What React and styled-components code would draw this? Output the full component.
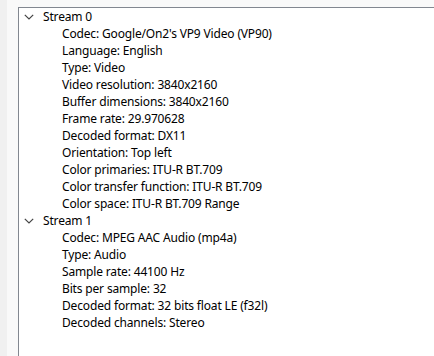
import styled, { createGlobalStyle } from "styled-components";

const GlobalStyle = createGlobalStyle`
	html, body {
		margin: 0;
		padding: 0;
		background: #f0f0f0;
	}
	body {
		font-family: "Noto Sans", "Open Sans", sans-serif;
		font-size: 12px;
		letter-spacing: -0.16px;
		color: #000;
	}
`;

const Window = styled.div`
	width: 434px;
	height: 356px;
	overflow: hidden;
	display: flex;
	background: #f0f0f0;
`;

const Gutter = styled.div`
	width: 7px;
	flex-shrink: 0;
	background: #f0f0f0;
`;

const Pane = styled.div`
	flex: 1;
	display: flex;
	flex-direction: column;
	padding: 7px 0 0 11px;
	background: #f9f9f9;
`;

const TreeView = styled.ul`
	flex: 1;
	margin: 0;
	padding: 0;
	list-style: none;
	background: #fff;
	border-top: 1px solid #828790;
	border-left: 1px solid #828790;
`;

const Node = styled.li`
	margin: 0;
	padding: 0;
`;

const Row = styled.div`
	height: 17px;
	display: flex;
	align-items: center;
	padding-left: ${(props) => props.$indent}px;
	white-space: nowrap;
	line-height: 17px;
`;

const Toggle = styled.span`
	width: 18px;
	display: flex;
	align-items: center;
	justify-content: center;
	margin-right: 5px;
`;

const Children = styled.ul`
	margin: 0;
	padding: 0;
	list-style: none;
`;

const streams = [
	{
		name: "Stream 0",
		props: [
			"Codec: Google/On2's VP9 Video (VP90)",
			"Language: English",
			"Type: Video",
			"Video resolution: 3840x2160",
			"Buffer dimensions: 3840x2160",
			"Frame rate: 29.970628",
			"Decoded format: DX11",
			"Orientation: Top left",
			"Color primaries: ITU-R BT.709",
			"Color transfer function: ITU-R BT.709",
			"Color space: ITU-R BT.709 Range",
		],
	},
	{
		name: "Stream 1",
		props: [
			"Codec: MPEG AAC Audio (mp4a)",
			"Type: Audio",
			"Sample rate: 44100 Hz",
			"Bits per sample: 32",
			"Decoded format: 32 bits float LE (f32l)",
			"Decoded channels: Stereo",
		],
	},
];

function Chevron() {
	return (
		<svg width="10" height="6" viewBox="0 0 10 6">
			<path d="M0.8 0.8 L5 5 L9.2 0.8" fill="none" stroke="#444" strokeWidth="1.2" />
		</svg>
	);
}

export default function App() {
	return (
		<>
			<GlobalStyle />
			<Window>
				<Gutter />
				<Pane>
					<TreeView role="tree">
						{streams.map((s) => (
							<Node key={s.name} role="treeitem" aria-expanded="true">
								<Row $indent={1}>
									<Toggle>
										<Chevron />
									</Toggle>
									{s.name}
								</Row>
								<Children role="group">
									{s.props.map((p) => (
										<Node key={p} role="treeitem">
											<Row $indent={43}>{p}</Row>
										</Node>
									))}
								</Children>
							</Node>
						))}
					</TreeView>
				</Pane>
			</Window>
		</>
	);
}
